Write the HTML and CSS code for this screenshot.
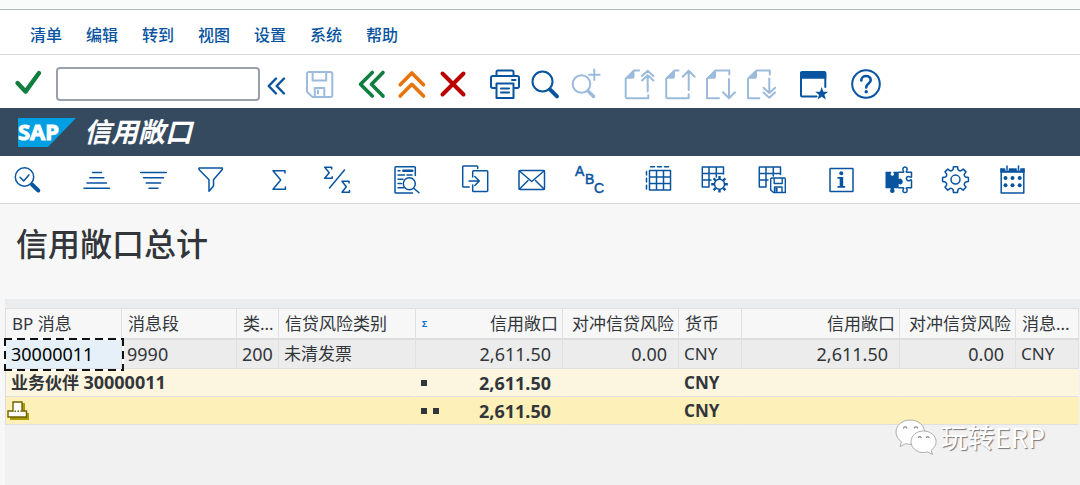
FILE: index.html
```html
<!DOCTYPE html>
<html lang="zh-CN">
<head>
  <meta charset="UTF-8">
  <meta name="viewport" content="width=device-width, initial-scale=1.0">
  <title>信用敞口</title>
  <link rel="stylesheet" href="styles.css">
</head>
<body>
  <div class="window-edge"></div>

  <nav class="menu-bar">
    <button>清单</button>
    <button>编辑</button>
    <button>转到</button>
    <button>视图</button>
    <button>设置</button>
    <button>系统</button>
    <button>帮助</button>
  </nav>

  <div class="system-bar">
    <div class="command">
      <button class="icon green" aria-label="回车"><svg viewBox="0 0 30 30"><path stroke-width="4.4" d="M4.5 14l8 8.6L26 4"/></svg></button>
      <input type="text" id="okcode" aria-label="命令">
      <button class="icon collapse" aria-label="折叠"><svg viewBox="0 0 30 30"><path stroke-width="2.4" d="M15 9.5L7.7 17l7.3 7.5M23 9.5L15.700 17l7.300 7.500"/></svg></button>
      <button class="icon faded" aria-label="保存"><svg viewBox="0 0 30 30"><path d="M4.500 3h22a1.800 1.800 0 0 1 1.800 1.800v21.400a1.800 1.800 0 0 1-1.800 1.800H8.500L3 22.700V4.800A1.800 1.800 0 0 1 4.500 3zM8.600 3v8.500h13.600V3M10.800 28v-9h9.500v9M14 21.500v3"/></svg></button>
    </div>
    <div class="group">
      <button class="icon green" aria-label="返回"><svg viewBox="0 0 30 30"><path stroke-width="3.600" d="M16.300 3.500L4.500 15.300l11.800 11.800M27 3.500L15.500 15.300 27 27.100"/></svg></button>
      <button class="icon orange" aria-label="退出"><svg viewBox="0 0 30 30"><path stroke-width="3.600" d="M3.200 15.800L14.800 4l11.700 11.800M3.200 27l11.600-11.700L26.500 27"/></svg></button>
      <button class="icon red" aria-label="取消"><svg viewBox="0 0 30 30"><path stroke-width="4" d="M4.500 4.500l21 21M25.500 4.500l-21 21"/></svg></button>
    </div>
    <div class="group">
      <button class="icon" aria-label="打印"><svg viewBox="0 0 30 30"><path d="M6.500 6.500V3a1.500 1.500 0 0 1 1.500-1.500h14A1.500 1.500 0 0 1 23.500 3v3.500M6.500 19H2.700A1.700 1.700 0 0 1 1 17.300V8.700A1.700 1.700 0 0 1 2.700 7h24.600A1.700 1.700 0 0 1 29 8.700v8.600a1.700 1.700 0 0 1-1.700 1.700h-3.800M6.500 14.500h17V29h-17zM11 19.500h8M11 23.500h8M22 11h3.500"/></svg></button>
      <button class="icon" aria-label="查找"><svg viewBox="0 0 30 30"><circle cx="11.500" cy="12.500" r="10"/><path stroke-width="4" d="M19.500 20.800l6.500 6.500"/></svg></button>
      <button class="icon faded" aria-label="继续查找"><svg viewBox="0 0 30 30"><circle cx="9.500" cy="15" r="8.800"/><path stroke-width="3.400" d="M16.500 22.500l5 5"/><path d="M22.300 .5v10.500M17 5.800h10.600"/></svg></button>
    </div>
    <div class="group">
      <button class="icon faded" aria-label="首页"><svg viewBox="0 0 30 30"><path d="M15 1.500h-5L1.700 9.800v18a1.500 1.500 0 0 0 1.500 1.500h21.100v-3M23.700 22.500V6.500M18 11.500l5.700-5.300 5.700 5.300M18 7l5.700-5.300L29.400 7"/><path class="solid" d="M10.500 1.500v6.300a2 2 0 0 1-2 2H1.700z"/></svg></button>
      <button class="icon faded" aria-label="上一页"><svg viewBox="0 0 30 30"><path d="M13.500 1.500H9.600L1.200 9.800v18a1.500 1.500 0 0 0 1.500 1.500h21v-4M23.700 21V2M17.700 7.700l6-6 6 6"/><path class="solid" d="M10 1.500v6.300a2 2 0 0 1-2 2H1.200z"/></svg></button>
      <button class="icon faded" aria-label="下一页"><svg viewBox="0 0 30 30"><path d="M13 29.200H1V9.800l8.500-8.300h13.800v4M23 10v19M17 23.300l6 6 6-6"/><path class="solid" d="M10 1.500v6.300a2 2 0 0 1-2 2H1z"/></svg></button>
      <button class="icon faded" aria-label="末页"><svg viewBox="0 0 30 30"><path d="M12.300 29.200H1V9.800l8.500-8.300h13.300v4M22.300 9.500V24M16.500 18.700l5.800 5.300 5.800-5.300M16.500 23.500l5.800 5.300 5.800-5.300"/><path class="solid" d="M10 1.500v6.300a2 2 0 0 1-2 2H1z"/></svg></button>
    </div>
    <div class="group">
      <button class="icon" aria-label="新建窗口"><svg viewBox="0 0 30 30"><path d="M17.500 27.500H3A1 1 0 0 1 2 26.500V4h24.300v14"/><path class="solid" d="M1 9.700V4a2 2 0 0 1 2-2h22.300a2 2 0 0 1 2 2v5.700zM22.700 18l1.700 4.800h4.800l-3.800 3 1.400 4.700-4.100-2.800-4.100 2.800 1.400-4.700-3.800-3h4.800z"/></svg></button>
    </div>
    <div class="group">
      <button class="icon" aria-label="帮助"><svg viewBox="0 0 30 30"><circle cx="15" cy="15" r="13.800"/><path stroke-width="2.600" d="M10.300 11.500c0-6 9.600-5.800 9.400-.3-.1 3.400-4.500 3.200-4.500 7.300"/><circle class="solid" cx="15.200" cy="22.800" r="1.700"/></svg></button>
    </div>
  </div>

  <header class="title-bar">
    <svg class="logo" viewBox="0 0 58 29">
      <path fill="#009fe3" d="M0 0h58L30 29H0z"/>
      <text x="0" y="22">SAP</text>
    </svg>
    <span class="title">信用敞口</span>
  </header>

  <div class="app-bar">
    <div class="group">
      <button class="icon" aria-label="选择明细"><svg viewBox="0 0 30 30"><circle cx="11.500" cy="12" r="9.200"/><path d="M7 12.300l3.700 3.600 5.200-6"/><path stroke-width="4" d="M19 19.500l6.300 6"/></svg></button>
    </div>
    <div class="group">
      <button class="icon" aria-label="升序排序"><svg viewBox="0 0 30 30"><path d="M10.500 7.500h9M7.800 12.700h14M5 18h19.500M2 23.300h25.500"/></svg></button>
      <button class="icon" aria-label="降序排序"><svg viewBox="0 0 30 30"><path d="M1.700 7.500h25.600M4.500 12.700h20M7.200 18h14.500M10 23.300h9"/></svg></button>
      <button class="icon" aria-label="过滤器"><svg viewBox="0 0 30 30"><path d="M3 3h23.300v1.500l-8.800 10.300V21L13 26.300V14.800L3 4.500z"/></svg></button>
    </div>
    <div class="group">
      <button class="icon" aria-label="总计"><svg viewBox="0 0 30 30"><path d="M20 8V5.700H8L15.700 15 8 24.300h12.400V22"/></svg></button>
      <button class="icon" aria-label="小计"><svg viewBox="0 0 30 30"><path d="M9.700 4V2.300h-7L7.200 7.800l-4.500 5.500h7.500v-1.600M27 18v-1.700h-7l4.300 5.400-4.300 5.500h7.500v-1.600M22.500 5L7.500 23"/></svg></button>
    </div>
    <div class="group">
      <button class="icon" aria-label="打印预览"><svg viewBox="0 0 30 30"><path d="M24.300 10.500V2.500a.8.800 0 0 0-.8-.8H4.800a.8.800 0 0 0-.8.800v24.700a.8.800 0 0 0 .8.800h16.700M7 5.800h2M7 10h6.500M16 10h5M7 14.300h5M7 18.500h3.500M7 22.700h5.500M23 23.500l5 4.300"/><path stroke-width="2.500" d="M12.300 5.800h9"/><circle cx="18.300" cy="18.700" r="6"/></svg></button>
    </div>
    <div class="group">
      <button class="icon" aria-label="导出"><svg viewBox="0 0 30 30"><path d="M17.700 3.500V1.800a.8.800 0 0 0-.8-.8H3.500a.8.800 0 0 0-.8.800v19.400a.8.800 0 0 0 .8.800h5.700M12.700 12V6.500a.8.800 0 0 1 .8-.8h13.400a.8.800 0 0 1 .8.800v19.200a.8.800 0 0 1-.8.800H13.500a.8.800 0 0 1-.8-.8V20M9 16h10M14.800 11.500l4.500 4.500-4.500 4.500"/></svg></button>
      <button class="icon" aria-label="邮件"><svg viewBox="0 0 30 30"><rect x="2" y="5.500" width="25.500" height="19" rx="1"/><path d="M2.500 6l12.200 10.500L27 6M2.500 24l8.500-8.500M27 24l-8.500-8.500"/></svg></button>
      <button class="icon" aria-label="ABC 分析"><svg viewBox="0 0 30 30"><text x="1" y="11">A</text><text x="11" y="19">B</text><text x="20" y="28">C</text></svg></button>
    </div>
    <div class="group">
      <button class="icon" aria-label="选择布局"><svg viewBox="0 0 30 30"><path d="M6.500 5.500h21v19.500h-21zM13.500 5.500V25M20.500 5.500V25M6.500 12h21M6.500 18.500h21M7.500 1.700h4M14.500 1.700h4M21.500 1.700h4M3.500 6.500V10M3.500 13.300V17M3.500 20.300V24"/></svg></button>
      <button class="icon" aria-label="更改布局"><svg viewBox="0 0 30 30"><path d="M23.500 9V2H2.300v20H9v-20M16.300 2v10M2.300 8.500h21.200M2.300 15H11"/><circle cx="19.500" cy="19.300" r="5"/><path stroke-width="2.400" stroke-linecap="butt" d="M19.500 11v3M19.500 24.500v3M11.200 19.300h3M24.800 19.300h3M13.600 13.400l2.100 2.100M23.300 23.100l2.100 2.100M13.600 25.200l2.100-2.100M23.300 15.500l2.100-2.100"/></svg></button>
      <button class="icon" aria-label="保存布局"><svg viewBox="0 0 30 30"><path d="M23.500 9.500V2H2.300v20H9v-20M16.300 2v9M2.300 8.500h21.200M2.300 15H11"/><path stroke-width="1.400" d="M14.500 13h12.800a1 1 0 0 1 1 1v13.500H16.500L13.700 25V13.800zM17.200 13v5.500h8V13M17.500 27.500v-5.500h7.500v5.500"/><path stroke-width="2.200" d="M19.500 23.500v2.500"/></svg></button>
    </div>
    <div class="group">
      <button class="icon" aria-label="信息"><svg viewBox="0 0 30 30"><rect x="4" y="3.500" width="23" height="23" rx=".5"/><circle class="solid" cx="15.300" cy="8.300" r="2"/><path class="solid" d="M11.500 12h5.700v9h2v1.800h-7.700V21h2.200v-7.200h-2.200z"/></svg></button>
      <button class="icon" aria-label="附加功能"><svg viewBox="0 0 30 30"><path class="solid" d="M2.500 6.700h5.300c.8 0 .6.800.1 1.500-.9 1.400.1 2.500 1.400 2.500s2.300-1.100 1.400-2.500c-.5-.7-.6-1.500.2-1.500h4.800v7.600c1-.8 1.500-1 2.600-.4 2 1.200 2 4.200 0 5.300-1.100.6-1.600.3-2.600-.4v4.400h-4.500c-.6 0-.3.800.1 1.500.9 1.700-.3 3.300-2 3.300s-2.900-1.600-2-3.300c.4-.7.700-1.500.1-1.500H2.500z"/><path stroke-width="1.500" d="M15.700 7.200h4.500c.9 0 .4-.9 0-1.600C19.300 3.800 20.300 2 22 2s2.700 1.800 1.800 3.600c-.4.700-.9 1.600 0 1.600h4.700v4.600c0 .9-.9.500-1.600.1-1.700-1-3.500 0-3.500 1.700s1.800 2.700 3.500 1.700c.7-.4 1.600-.8 1.600.1v7.400h-4.700c-.9 0-.4.800 0 1.500.9 1.700-.1 3.200-1.800 3.200s-2.700-1.500-1.800-3.200c.4-.7.9-1.500 0-1.500h-4.500"/></svg></button>
      <button class="icon" aria-label="设置"><svg viewBox="0 0 30 30"><circle cx="15.500" cy="14.600" r="4.500"/><path transform="translate(15.500 14.600)" d="M-2.500-10l.5-2.900h4l.5 2.900q1.400 1.700 2.800 1.200l2.400-1.700 2.800 2.800-1.700 2.400q-.4 1.600 1.200 2.800l2.900.5v4l-2.900.5q-1.600 1.200-1.200 2.800l1.700 2.400-2.800 2.800-2.400-1.700q-1.400-.5-2.800 1.200l-.5 2.900h-4l-.5-2.900q-1.400-1.700-2.800-1.200l-2.400 1.700-2.800-2.800 1.700-2.400q.4-1.600-1.200-2.800l-2.900-.5v-4l2.900-.5q1.600-1.200 1.200-2.800l-1.700-2.400 2.800-2.800 2.400 1.700q1.400.5 2.800-1.200z"/></svg></button>
      <button class="icon" aria-label="日历"><svg viewBox="0 0 30 30"><path d="M4.200 4v24h22.600V4"/><path class="solid" d="M3.300 3.300h24.400v4.500H3.300z"/><path stroke="#fff" stroke-width="3.500" stroke-linecap="butt" d="M10 3v2.500M21.500 3v2.500"/><path d="M10 1v4M21.500 1v4"/><g class="solid"><circle cx="8.500" cy="13" r="2"/><circle cx="15.500" cy="13" r="2"/><circle cx="22.700" cy="13" r="2"/><circle cx="8.500" cy="20.300" r="2"/><circle cx="15.500" cy="20.300" r="2"/><circle cx="22.700" cy="20.300" r="2"/></g></svg></button>
    </div>
  </div>

  <main>
    <h1>信用敞口总计</h1>

    <div class="grid">
      <table>
        <colgroup>
          <col class="w-partner">
          <col class="w-segment">
          <col class="w-type">
          <col class="w-category">
          <col class="w-exposure">
          <col class="w-hedged">
          <col class="w-currency">
          <col class="w-exposure2">
          <col class="w-hedged">
          <col class="w-last">
        </colgroup>
        <thead>
          <tr>
            <th>BP 消息</th>
            <th>消息段</th>
            <th>类...</th>
            <th>信贷风险类别</th>
            <th><div class="split"><span class="sigma">Σ</span><span>信用敞口</span></div></th>
            <th class="right">对冲信贷风险</th>
            <th>货币</th>
            <th class="right">信用敞口</th>
            <th class="right">对冲信贷风险</th>
            <th>消息...</th>
          </tr>
        </thead>
        <tbody>
          <tr class="item">
            <td class="num selected">30000011</td>
            <td class="num">9990</td>
            <td class="num">200</td>
            <td>未清发票</td>
            <td class="num right">2,611.50</td>
            <td class="num right">0.00</td>
            <td>CNY</td>
            <td class="num right">2,611.50</td>
            <td class="num right">0.00</td>
            <td>CNY</td>
          </tr>
          <tr class="subtotal">
            <td colspan="4">业务伙伴 <span class="num">30000011</span></td>
            <td class="num right"><div class="split"><span class="level"><i></i></span><span>2,611.50</span></div></td>
            <td></td>
            <td>CNY</td>
            <td></td>
            <td></td>
            <td></td>
          </tr>
          <tr class="total">
            <td colspan="4" class="total-mark"><svg width="22" height="19" viewBox="0 0 22 19"><path fill="#a89a00" d="M7 2h11v10h4v7H3v-5h4z"/><path fill="#fff" stroke="#6b6200" stroke-width="1.400" d="M6 1h9v9h4.500v6H1v-6h5z"/><path stroke="#6b6200" stroke-width="1.400" stroke-dasharray="1.500 1.500" d="M7.500 10.300h7"/></svg></td>
            <td class="num right"><div class="split"><span class="level"><i></i><i></i></span><span>2,611.50</span></div></td>
            <td></td>
            <td>CNY</td>
            <td></td>
            <td></td>
            <td></td>
          </tr>
        </tbody>
      </table>
    </div>
  </main>

  <div class="watermark">
    <svg width="42" height="36" viewBox="0 0 42 36">
      <g fill="#fff" stroke="#999" stroke-width=".8">
        <path d="M15 1C7 1 1 6.500 1 13c0 4 2 7.500 5.500 9.800L5 27.500l5.500-2.800c1.400.4 3 .6 4.500.6 8 0 14.500-5.500 14.500-12.300S23 1 15 1z"/>
        <path d="M28.500 12C21.500 12 16 16.700 16 22.700s5.500 10.800 12.500 10.800c1.400 0 2.800-.2 4-.6l5 2.400-1.400-4c3-2 5-5.100 5-8.600C41.100 16.700 35.500 12 28.500 12z"/>
      </g>
      <path fill="none" stroke="#888" stroke-width="1.200" d="M8.500 9.500a1.700 1.700 0 0 1 3.400 0M19.300 9.500a1.700 1.700 0 0 1 3.400 0M23.300 19a1.400 1.400 0 0 1 2.800 0M31.300 19a1.400 1.400 0 0 1 2.800 0"/>
    </svg>
    <span>玩转ERP</span>
  </div>
</body>
</html>
```
FILE: styles.css
```css
body {
  margin: 0;
  min-height: 100vh;
  display: flex;
  flex-direction: column;
  position: relative;
  background-color: #f7f7f7;
  color: #32363a;
  font-family: "Noto Sans", "Noto Sans CJK SC", sans-serif;
  font-size: 17px;
}

button {
  padding: 0;
  border: none;
  background: none;
  font-family: inherit;
  cursor: pointer;
}

.window-edge {
  height: 9px;
  background-color: #f9fbfa;
  border-bottom: 1px solid #b4b8b8;
}

/* menu */
.menu-bar {
  display: flex;
  gap: 24px;
  padding: 0 30px;
  background-color: #fff;
  border-bottom: 1px solid #d8dada;
}

.menu-bar button {
  height: 44px;
  padding-top: 4px;
  color: #0854a0;
  font-size: 16px;
  font-weight: 500;
}

/* toolbars */
.system-bar,
.app-bar {
  display: flex;
  align-items: center;
  background-color: #fff;
}

.system-bar {
  gap: 22px;
  padding: 12px 13px 7px;
}

.app-bar {
  gap: 39px;
  padding: 9px 13px 8px;
  border-bottom: 1px solid #d5d7d8;
}

.command {
  display: flex;
  align-items: center;
  gap: 13px;
}

.group {
  display: flex;
  gap: 11px;
}

.app-bar .group {
  gap: 27px;
}

#okcode {
  box-sizing: border-box;
  width: 204px;
  height: 34px;
  padding: 0 8px;
  border: 2px solid #9aa0ab;
  border-radius: 4px;
  background-color: #fff;
  font-size: 17px;
}

.collapse {
  margin-left: -12px;
}

.icon {
  width: 30px;
  height: 30px;
  color: #0854a0;
}

.icon svg {
  display: block;
  width: 30px;
  height: 30px;
  overflow: visible;
  fill: none;
  stroke: currentColor;
  stroke-width: 2;
  stroke-linecap: round;
  stroke-linejoin: round;
}

.app-bar .icon svg {
  stroke-width: 1.5;
}

.icon .solid {
  fill: currentColor;
  stroke: none;
}

.icon text {
  fill: currentColor;
  stroke-width: 0.5;
  font-family: "Liberation Sans", Arial, sans-serif;
  font-size: 14px;
}

.green { color: #107e3e; }
.orange { color: #e9730c; }
.red { color: #bb0000; }
.faded { color: #9cbbdc; }

/* title */
.title-bar {
  display: flex;
  align-items: center;
  gap: 8px;
  height: 48px;
  padding: 0 18px;
  background-color: #354a5f;
}

.logo {
  width: 58px;
  height: 29px;
}

.logo text {
  fill: #fff;
  stroke: #fff;
  stroke-width: 1;
  font-family: "Noto Sans", sans-serif;
  font-size: 22px;
  font-weight: bold;
}

.title {
  color: #fff;
  font-size: 27px;
  font-weight: bold;
  font-style: italic;
  line-height: 48px;
}

/* list */
main {
  flex: 1;
  display: flex;
  flex-direction: column;
}

h1 {
  margin: 0;
  padding: 16px 16px 31px;
  font-size: 32px;
  font-weight: 500;
  line-height: 48px;
}

.grid {
  flex: 1;
  padding: 9px 2px 0 0;
  margin-left: 5px;
  background: linear-gradient(#ebecee 9px, #f1f1f1 9px);
}

table {
  width: 100%;
  table-layout: fixed;
  border-collapse: separate;
  border-spacing: 0;
  border-left: 1px solid #dcdcdc;
}

.w-partner { width: 116px; }
.w-segment { width: 115px; }
.w-type { width: 42px; }
.w-category { width: 137px; }
.w-exposure { width: 147px; }
.w-hedged { width: 116px; }
.w-currency { width: 63px; }
.w-exposure2 { width: 158px; }
.w-last { width: 63px; }

th,
td {
  box-sizing: border-box;
  height: 28px;
  padding: 0 11px 0 5px;
  border-right: 1px solid #e0e0e0;
  border-bottom: 1px solid #e0e0e0;
  line-height: 24px;
  text-align: left;
  white-space: nowrap;
}

th {
  height: 32px;
  padding: 1px 4px 0 6px;
  border-top: 1px solid #e0e0e0;
  border-bottom: 2px solid #dcdcdc;
  background-color: #f7f7f7;
  font-weight: normal;
}

.right {
  text-align: right;
}

.num {
  font-size: 18px;
}

.split {
  display: flex;
  align-items: center;
  justify-content: space-between;
}

.sigma {
  color: #0a6ed1;
  font-size: 9px;
  font-weight: bold;
}

.item td {
  height: 29px;
  background-color: #ececec;
}

.item .selected {
  position: relative;
  background-color: #e5f0f8;
  color: #000;
}

/* dashed cursor frame around the active cell */
.selected::after {
  content: "";
  position: absolute;
  inset: -2px -3px -3px -2px;
  background:
    repeating-linear-gradient(90deg, #111 0 8px, #fff 8px 13px) top / 100% 2px no-repeat,
    repeating-linear-gradient(90deg, #111 0 8px, #fff 8px 13px) bottom / 100% 2px no-repeat,
    repeating-linear-gradient(#111 0 8px, #fff 8px 13px) left / 2px 100% no-repeat,
    repeating-linear-gradient(#111 0 8px, #fff 8px 13px) right / 2px 100% no-repeat;
}

.subtotal td,
.total td {
  border-right-color: transparent;
  font-weight: bold;
}

.subtotal td { background-color: #fcf6e0; }
.total td { background-color: #fef0b9; }

.total .total-mark {
  padding-left: 1px;
}

.total-mark svg {
  display: block;
  fill: none;
}

.level {
  display: flex;
  gap: 6px;
}

.level i {
  width: 6px;
  height: 6px;
  background-color: #32363a;
}

/* account mark laid over the list */
.watermark {
  position: absolute;
  right: 35px;
  bottom: 29px;
  display: flex;
  align-items: center;
  gap: 4px;
  color: #fff;
  font-family: "Noto Sans CJK SC", sans-serif;
  font-size: 27px;
  font-weight: 400;
  line-height: 38px;
  text-shadow: 1px 1px 1px #777;
}
```
